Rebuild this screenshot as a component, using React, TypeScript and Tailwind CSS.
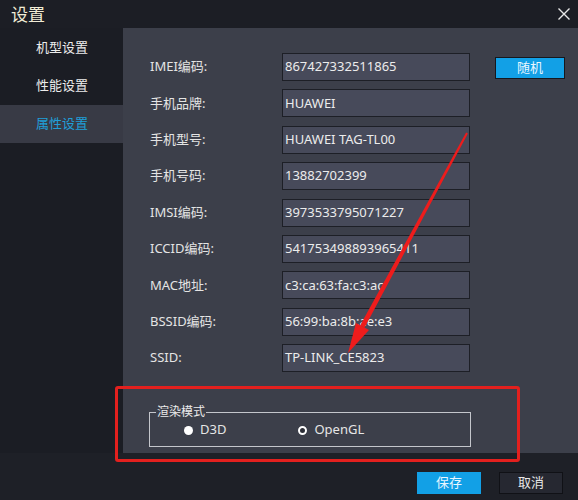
import { useState } from "react";

const rows: { label: string; value: string }[] = [
  { label: "IMEI编码:", value: "867427332511865" },
  { label: "手机品牌:", value: "HUAWEI" },
  { label: "手机型号:", value: "HUAWEI TAG-TL00" },
  { label: "手机号码:", value: "13882702399" },
  { label: "IMSI编码:", value: "3973533795071227" },
  { label: "ICCID编码:", value: "541753498893965411" },
  { label: "MAC地址:", value: "c3:ca:63:fa:c3:ac" },
  { label: "BSSID编码:", value: "56:99:ba:8b:ae:e3" },
  { label: "SSID:", value: "TP-LINK_CE5823" },
];

const menu = ["机型设置", "性能设置", "属性设置"];

export default function App() {
  const [active, setActive] = useState(2);
  const [mode, setMode] = useState<"d3d" | "opengl">("d3d");

  return (
    <div
      className="relative flex h-[500px] w-[578px] flex-col overflow-hidden bg-[#1c1e25] text-[#e6e6e6]"
      style={{ fontFamily: '"Noto Sans", "Noto Sans CJK SC", sans-serif' }}
    >
      {/* title bar */}
      <div className="flex h-[28px] items-center justify-between pl-[11px] pr-[6px]">
        <span className="text-[17px] leading-none text-[#f1ecd6]">设置</span>
        <svg width="14" height="14" viewBox="0 0 14 14" className="mr-[1px]">
          <path d="M1.5 1.5 L12.5 12.5 M12.5 1.5 L1.5 12.5" stroke="#e8e8e8" strokeWidth="1.4" />
        </svg>
      </div>

      <div className="flex h-[425px]">
        {/* sidebar */}
        <div className="w-[123px] bg-[#1b1d24] pt-[1px]">
          {menu.map((m, i) => (
            <button
              key={m}
              onClick={() => setActive(i)}
              className={`flex h-[38px] w-full items-center pl-[36px] text-[13px] ${
                active === i ? "bg-[#383a45] text-[#1f9fd8]" : "text-[#ececec]"
              }`}
            >
              {m}
            </button>
          ))}
        </div>

        {/* content */}
        <div className="flex-1 bg-[#3c3f4a] pl-[27px] pt-[25px]">
          <div className="flex">
            <div className="flex flex-col gap-y-[8.4px]">
              {rows.map((r) => (
                <div key={r.label} className="flex h-[28px] items-center">
                  <span className="w-[132px] text-[13px] text-[#e4e4e4]">{r.label}</span>
                  <div className="flex h-[28px] w-[188px] items-center border border-[#1d1f26] bg-[#474a5a] px-[2px] text-[13px] text-[#ececec]">
                    {r.value}
                  </div>
                </div>
              ))}
            </div>
            <button className="ml-[25px] mt-[4px] h-[22px] w-[70px] border border-[#16181e] bg-[#12a0e6] text-[13px] text-[#e8f6ff]">
              随机
            </button>
          </div>

          <fieldset className="ml-[-1px] mt-[34px] h-[41px] w-[322px] border border-[#c4c6cc] px-[6px]">
            <legend className="px-[1px] text-[12px] leading-[12px] text-[#ececec]">渲染模式</legend>
            <div className="flex h-[24px] items-center text-[13px]">
              <button onClick={() => setMode("d3d")} className="ml-[28px] flex items-center gap-[7px]">
                <span
                  className={`h-[9px] w-[9px] rounded-full ${
                    mode === "d3d" ? "bg-white" : "border-[2px] border-white bg-[#2c2e37]"
                  }`}
                />
                D3D
              </button>
              <button onClick={() => setMode("opengl")} className="ml-[72px] flex items-center gap-[7px]">
                <span
                  className={`h-[9px] w-[9px] rounded-full ${
                    mode === "opengl" ? "bg-white" : "border-[2px] border-white bg-[#2c2e37]"
                  }`}
                />
                OpenGL
              </button>
            </div>
          </fieldset>
        </div>
      </div>

      {/* footer */}
      <div className="flex flex-1 justify-end gap-[18px] bg-[#1e2027] pr-[15px] pt-[19px]">
        <button className="h-[22px] w-[64px] bg-[#12a0e6] text-[13px] text-[#e8f6ff]">保存</button>
        <button className="h-[22px] w-[64px] border border-[#101116] bg-[#262831] text-[13px] text-[#e6e6e6]">
          取消
        </button>
      </div>

      {/* annotation: red box */}
      <div className="pointer-events-none absolute left-[115px] top-[386px] h-[76px] w-[405px] rounded-[3px] border-[3px] border-[#e3201e]" />

      {/* annotation: red arrow */}
      <svg className="pointer-events-none absolute left-0 top-0" width="578" height="500" viewBox="0 0 578 500">
        <polygon points="467.9,133.5 466.1,132.5 360.1,325.4 364.5,327.8" fill="#ee1c1c" />
        <polygon points="348,353 356,323 369,330" fill="#ee1c1c" />
      </svg>
    </div>
  );
}
